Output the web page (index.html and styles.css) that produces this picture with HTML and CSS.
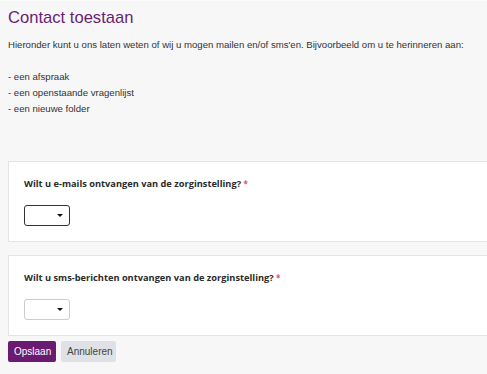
FILE: index.html
```html
<!DOCTYPE html>
<html lang="nl">
<head>
  <meta charset="UTF-8" />
  <meta name="viewport" content="width=device-width, initial-scale=1.0" />
  <title>Contact toestaan</title>
  <link rel="stylesheet" href="styles.css">
</head>
<body>
  <main class="page">
    <h1>Contact toestaan</h1>
    <p class="intro">Hieronder kunt u ons laten weten of wij u mogen mailen en/of sms'en. Bijvoorbeeld om u te herinneren aan:</p>
    <ul class="reasons">
      <li>- een afspraak</li>
      <li>- een openstaande vragenlijst</li>
      <li>- een nieuwe folder</li>
    </ul>

    <section class="card">
      <label class="question" for="mail">Wilt u e-mails ontvangen van de zorginstelling? <span class="req">*</span></label>
      <span class="select-wrap focused">
        <select id="mail">
          <option></option>
          <option>Ja</option>
          <option>Nee</option>
        </select>
      </span>
    </section>

    <section class="card">
      <label class="question" for="sms">Wilt u sms-berichten ontvangen van de zorginstelling? <span class="req">*</span></label>
      <span class="select-wrap">
        <select id="sms">
          <option></option>
          <option>Ja</option>
          <option>Nee</option>
        </select>
      </span>
    </section>

    <div class="actions">
      <button class="btn btn-primary">Opslaan</button>
      <button class="btn btn-secondary">Annuleren</button>
    </div>
  </main>
</body>
</html>
```

FILE: styles.css
```css
html, body {
  margin: 0;
  padding: 0;
  background: #f7f7f7;
  overflow: hidden;
}

body {
  font-family: 'Liberation Sans', Arial, sans-serif;
  color: #333;
  border-top: 1px solid #fbfbfb;
}

.page {
  padding: 7px 0 0 8px;
}

h1 {
  font-size: 16.6px;
  line-height: 20px;
  font-weight: normal;
  color: #6a1f73;
  margin: 0 0 9px 0;
}

.intro {
  font-size: 9.6px;
  line-height: 16px;
  margin: 0 0 16px 0;
}

.reasons {
  list-style: none;
  margin: 0 0 44px 0;
  padding: 0;
  font-size: 9.6px;
  line-height: 16px;
}

.card {
  background: #fff;
  border: 1px solid #e4e4e4;
  margin-right: -20px;
  padding: 15px;
  margin-bottom: 13px;
}

.card + .card {
  margin-bottom: 5px;
}

.question {
  display: block;
  font-family: 'Open Sans', sans-serif;
  font-weight: bold;
  font-size: 9.25px;
  line-height: 14px;
  color: #2b2b2b;
  margin-bottom: 14px;
}

.req {
  color: #e3555a;
  font-size: 8px;
  vertical-align: top;
}

.select-wrap {
  position: relative;
  display: block;
  width: 46px;
  height: 21px;
}

.select-wrap select {
  appearance: none;
  -webkit-appearance: none;
  width: 46px;
  height: 21px;
  box-sizing: border-box;
  border: 1px solid #ccc;
  border-radius: 3px;
  background: #fff;
  font-size: 10px;
  margin: 0;
  display: block;
}

.select-wrap.focused select {
  border: 1.5px solid #333;
}

.select-wrap::after {
  content: "";
  position: absolute;
  right: 7px;
  top: 9px;
  border-left: 3px solid transparent;
  border-right: 3px solid transparent;
  border-top: 3px solid #111;
  pointer-events: none;
}

.actions {
  display: flex;
  gap: 5px;
}

.btn {
  font-family: 'Liberation Sans', Arial, sans-serif;
  font-size: 10px;
  height: 21px;
  padding: 0 6px;
  border: none;
  border-radius: 2px;
  cursor: pointer;
}

.btn-primary {
  background: #6b1a71;
  color: #fff;
  width: 48px;
}

.btn-secondary {
  background: #dfe1e6;
  color: #444;
  width: 55px;
}
```
